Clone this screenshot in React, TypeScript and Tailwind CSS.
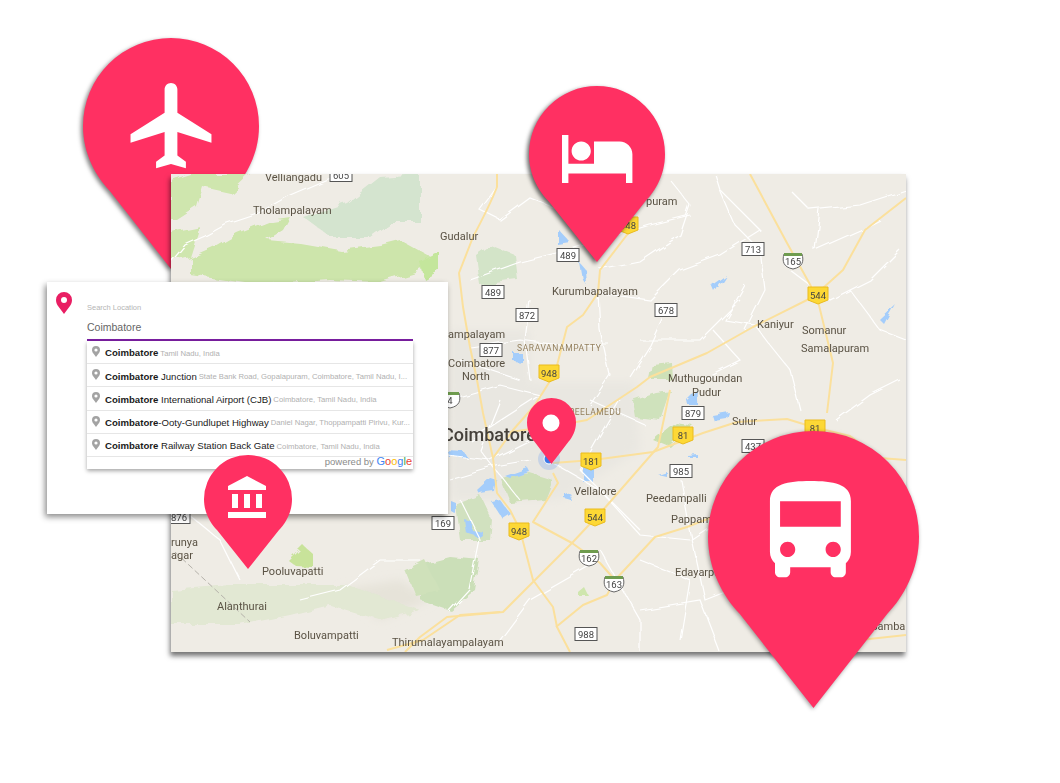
const pink = "#ff3062";

const planePath =
  "M21 16v-2l-8-5V3.5c0-.83-.67-1.5-1.5-1.5S10 2.67 10 3.5V9l-8 5v2l8-2.5V19l-2 1.5V22l3.5-1 3.5 1v-1.5L13 19v-5.5l8 2.5z";
const bedPath =
  "M7 13c1.66 0 3-1.34 3-3S8.66 7 7 7s-3 1.34-3 3 1.34 3 3 3zm12-6h-8v7H3V5H1v15h2v-3h18v3h2v-9c0-2.21-1.79-4-4-4z";
const busPath =
  "M4 16c0 .88.39 1.67 1 2.22V20c0 .55.45 1 1 1h1c.55 0 1-.45 1-1v-1h8v1c0 .55.45 1 1 1h1c.55 0 1-.45 1-1v-1.78c.61-.55 1-1.34 1-2.22V6c0-3.5-3.58-4-8-4s-8 .5-8 4v10zm3.5 1c-.83 0-1.5-.67-1.5-1.5S6.67 14 7.5 14s1.5.67 1.5 1.5S8.33 17 7.5 17zm9 0c-.83 0-1.5-.67-1.5-1.5s.67-1.5 1.5-1.5 1.5.67 1.5 1.5-.67 1.5-1.5 1.5zm1.5-6H6V6h12v5z";
const bankPath =
  "M4 10v7h3v-7H4zm6 0v7h3v-7h-3zM2 22h19v-3H2v3zm14-12v7h3v-7h-3zm-4.5-9L2 6v2h19V6l-9.5-5z";

// teardrop with the tip at the bottom centre
const dropPath = (w: number, h: number) => {
  const r = w / 2;
  const sx = w * 0.15;
  const sy = h * 0.66;
  return `M${r} 0A${r} ${r} 0 0 1 ${w} ${r}C${w} ${r * 1.32} ${w - sx * 0.5} ${sy - h * 0.06} ${w - sx} ${sy}L${r} ${h}L${sx} ${sy}C${sx * 0.5} ${sy - h * 0.06} 0 ${r * 1.32} 0 ${r}A${r} ${r} 0 0 1 ${r} 0Z`;
};

type PinProps = {
  w: number;
  h: number;
  className: string;
  color?: string;
  children?: React.ReactNode;
};

const Pin = ({ w, h, className, color = pink, children }: PinProps) => (
  <svg width={w} height={h} viewBox={`0 0 ${w} ${h}`} className={className}>
    <path d={dropPath(w, h)} fill={color} />
    {children}
  </svg>
);

const whiteBoxes: [string, number, number][] = [
  ["605", 341, 175],
  ["489", 568, 255],
  ["489", 493, 292],
  ["872", 527, 315],
  ["877", 491, 350],
  ["678", 666, 310],
  ["713", 753, 249],
  ["879", 693, 413],
  ["437", 753, 446],
  ["985", 681, 471],
  ["169", 443, 523],
  ["988", 586, 634],
  ["876", 179, 517],
];

const yellowShields: [string, number, number][] = [
  ["948", 628, 225],
  ["948", 549, 373],
  ["544", 818, 295],
  ["81", 683, 435],
  ["81", 815, 428],
  ["181", 591, 461],
  ["544", 595, 517],
  ["948", 519, 531],
];

const usShields: [string, number, number][] = [
  ["165", 793, 261],
  ["162", 589, 558],
  ["163", 614, 584],
  ["4", 450, 400],
];

const labels: [string, number, number][] = [
  ["Velliangadu", 265, 181],
  ["Tholampalayam", 253, 214],
  ["Gudalur", 440, 240],
  ["puram", 646, 205],
  ["Kurumbapalayam", 552, 295],
  ["ampalayam", 448, 338],
  ["Coimbatore", 448, 367],
  ["North", 462, 380],
  ["Kaniyur", 757, 328],
  ["Somanur", 802, 334],
  ["Samalapuram", 801, 352],
  ["Muthugoundan", 668, 382],
  ["Pudur", 692, 396],
  ["Sulur", 732, 425],
  ["Vellalore", 574, 495],
  ["Peedampalli", 646, 502],
  ["Pappampatti", 671, 523],
  ["Edayarpalayam", 675, 576],
  ["Samba", 871, 630],
  ["Thirumalayampalayam", 392, 646],
  ["Boluvampatti", 294, 639],
  ["Alanthurai", 217, 610],
  ["Pooluvapatti", 262, 575],
  ["runya", 171, 546],
  ["agar", 171, 559],
];

const yellowRoads = [
  "M497 174L497 187Q490 205 473 237L459 273L463 307L470 347L477 380L483 413L493 458L497 493L510 510L520 530L533 580L553 607L557 627L570 652",
  "M633 227L600 270L598 293L583 315L567 327L555 373L535 405L513 430L493 458",
  "M906 198L865 230L843 270L813 297L753 327L707 353L650 377L637 387L587 420L560 425L510 432",
  "M750 174L787 243L817 297L833 363L827 413",
  "M553 463L593 460L653 452L703 433L737 422L787 419L813 427L850 436L880 458L906 460",
  "M670 390L658 447L603 510L572 543L533 582L503 612L447 617L420 637L405 652",
  "M553 473L558 483L533 522L572 543L600 563L615 580L655 537L687 527L710 518",
  "M556 627L583 605L607 595L615 580",
  "M387 650L423 640L460 615L500 612",
  "M906 635L860 640L840 655",
];

const whiteRoads = [
  "M171 262L185 245L205 236L225 225L255 215L290 195L325 180L345 174",
  "M497 187L480 210L500 220L530 198L560 210",
  "M470 280L520 262L568 250L600 240L650 225L690 215",
  "M600 270L640 262L680 235L690 205L670 180",
  "M600 293L650 300L680 270L720 255L760 230L720 190L715 174",
  "M720 190L735 225L760 250L765 290L745 330",
  "M666 310L650 345L630 377",
  "M598 293L600 330L610 375L590 405",
  "M530 300L525 340L530 380",
  "M470 347L520 340L560 345L610 345",
  "M745 285L725 320L755 325L770 345L790 370L800 410",
  "M790 190L810 210L860 205L906 190",
  "M820 210L815 250L860 230L880 220",
  "M850 290L880 330L906 340",
  "M713 330L740 360L700 380",
  "M645 425L590 400",
  "M553 463L600 490L640 535L690 540L720 520",
  "M447 455L490 460L530 440",
  "M450 480L500 465L530 460",
  "M460 500L480 540L470 590L450 612",
  "M580 470L640 530",
  "M600 550L640 620L640 652",
  "M681 480L690 530L705 600L730 590L780 560",
  "M420 560L380 560L340 590L300 600",
  "M171 500L220 540L240 580",
  "M640 610L700 600L720 652",
  "M500 640L530 600L600 560",
  "M836 420L870 395L900 380",
  "M448 400L500 385L540 395L470 440",
  "M500 400L480 450L520 500",
  "M460 360L520 380",
  "M790 270L830 300L870 280L900 250",
  "M640 340L700 340L740 300",
  "M620 400L580 470",
  "M730 470L790 500",
  "M640 560L690 580L680 640",
];

const greens: [string, string][] = [
  ["M171 180L190 174H250L230 193L203 187L197 207L177 220H171Z", "#cfe6ae"],
  ["M171 232L200 226L190 257L171 262Z", "#cfe6ae"],
  ["M190 257L213 247L237 233L270 220L290 217L283 230L267 240L300 243L340 250L380 245L400 240L440 262L415 272L380 282L330 280L260 285L225 280L190 275Z", "#cde5ab"],
  ["M303 217L347 203L380 177L420 174V223L390 223L370 237L330 237Z", "#d4e4cf"],
  ["M420 262L440 252V272L425 280Z", "#c4e69c"],
  ["M476 255L490 245L515 255L518 280L480 285Z", "#d3e4c8"],
  ["M632 400L655 392L670 390L660 420L635 417Z", "#cfe2bc"],
  ["M653 440L675 422L693 425L670 447Z", "#cce0ae"],
  ["M653 365L672 363L673 380L650 380Z", "#cfe1b8"],
  ["M500 478L530 473L553 480L545 500L510 503Z", "#cfe0b9"],
  ["M455 505L480 495L492 520L490 540L460 540Z", "#d1e1bf"],
  ["M420 565L450 557L480 560L475 590L450 610L420 600Z", "#cbdfb8"],
  ["M405 570L425 560L440 590L415 595Z", "#cfe1ba"],
  ["M171 590L230 585L300 585L345 585L420 610L380 620L330 605L290 615L240 625L171 625Z", "#e2e8d3"],
  ["M288 560L303 545L312 553L312 567L296 566Z", "#c8e39a"],
  ["M578 592L584 587L588 595H578Z", "#cfe6ae"],
];

const waters: string[] = [
  "M557 228L570 242L557 244Z",
  "M580 263L586 270L587 285L583 280Z",
  "M513 352H522V362L513 361Z",
  "M448 452L465 453L468 458L450 458Z",
  "M505 476L528 468L530 472L510 478Z",
  "M477 490L490 478L497 480L495 492L480 494Z",
  "M492 502L500 500L511 514L503 519Z",
  "M583 467L593 468L593 482L583 482Z",
  "M564 493L568 491L571 500L564 498Z",
  "M450 500L455 502L455 513L450 510Z",
  "M463 518L470 520L472 530L484 532L478 536L465 532Z",
  "M685 398L690 393L697 390L696 403L686 403Z",
  "M713 416L730 413L728 420L715 422Z",
  "M688 456L698 455V458L688 458Z",
  "M659 476L668 473V478Z",
  "M712 285L726 275L715 292Z",
  "M880 320L896 305L885 325Z",
];

const MapCanvas = () => (
  <svg
    width={735}
    height={478}
    viewBox="171 174 735 478"
    className="block blur-[0.3px]"
  >
    <defs>
      <filter id="rough" x="-5%" y="-5%" width="110%" height="110%">
        <feTurbulence type="fractalNoise" baseFrequency="0.06" numOctaves={3} seed={4} />
        <feDisplacementMap in="SourceGraphic" scale={9} />
        <feGaussianBlur stdDeviation={0.5} />
      </filter>
      <filter id="wiggle" x="-5%" y="-5%" width="110%" height="110%">
        <feTurbulence type="fractalNoise" baseFrequency="0.05" numOctaves={2} seed={9} />
        <feDisplacementMap in="SourceGraphic" scale={7} />
      </filter>
      <filter id="soft" x="-10%" y="-10%" width="120%" height="120%">
        <feGaussianBlur stdDeviation={5} />
      </filter>
    </defs>
    <rect x={171} y={174} width={735} height={478} fill="#efece5" />
    <g filter="url(#soft)">
      <path d="M448 382H635L640 450L560 500L450 500Z" fill="#e9e7e1" />
      <path d="M448 330L530 330L530 385L448 385Z" fill="#e9e7e1" />
      <path d="M340 590L400 580L430 600L380 620Z" fill="#e6e3d9" />
      <path d="M788 440H840V450H788Z" fill="#dedbd2" />
    </g>
    <g filter="url(#rough)">
      {greens.map(([d, fill], i) => (
        <path key={i} d={d} fill={fill} />
      ))}
      {waters.map((d, i) => (
        <path key={i} d={d} fill="#a4cdfb" />
      ))}
    </g>
    <g filter="url(#wiggle)" fill="none">
      {whiteRoads.map((d, i) => (
        <path key={i} d={d} stroke="#ffffff" strokeWidth={1.2} />
      ))}
    </g>
    <g fill="none" strokeLinejoin="round">
      {yellowRoads.map((d, i) => (
        <path key={i} d={d} stroke="#fbe09c" strokeWidth={2} />
      ))}
    </g>
    <path d="M175 552L250 622" fill="none" stroke="#b5b2aa" strokeWidth={1} strokeDasharray="6 3" />
    <g className="[font-family:Roboto,sans-serif]" fontSize={11} fill="#5a5244">
      {labels.map(([t, x, y]) => (
        <text key={t + x} x={x} y={y}>
          {t}
        </text>
      ))}
      <text x={517} y={351} fontSize={8.5} letterSpacing={0.6} fill="#94805e">
        SARAVANAMPATTY
      </text>
      <text x={569} y={415} fontSize={8.5} letterSpacing={0.4} fill="#94805e">
        PEELAMEDU
      </text>
      <text x={442} y={441} fontSize={18} fontWeight={500} fill="#45403a">
        Coimbatore
      </text>
    </g>
    <g className="[font-family:Roboto,sans-serif]" textAnchor="middle" fontSize={9.5} fill="#444444">
      {whiteBoxes.map(([t, x, y]) => (
        <g key={t + x}>
          <rect x={x - 11} y={y - 6.5} width={22} height={13} fill="#ffffff" stroke="#555555" />
          <text x={x} y={y + 3.5}>
            {t}
          </text>
        </g>
      ))}
      {yellowShields.map(([t, x, y]) => (
        <g key={t + x}>
          <path
            d={`M${x - 10} ${y - 8}H${x + 10}V${y + 5}L${x} ${y + 9}L${x - 10} ${y + 5}Z`}
            fill="#fdd835"
            stroke="#eabb1e"
            strokeLinejoin="round"
          />
          <text x={x} y={y + 3.5}>
            {t}
          </text>
        </g>
      ))}
      {usShields.map(([t, x, y]) => (
        <g key={t + x}>
          <path
            d={`M${x - 9} ${y - 7}H${x + 9}C${x + 11} ${y} ${x + 10} ${y + 6} ${x} ${y + 8}C${x - 10} ${y + 6} ${x - 11} ${y} ${x - 9} ${y - 7}Z`}
            fill="#ffffff"
            stroke="#666666"
          />
          <rect x={x - 9} y={y - 8} width={18} height={3} fill="#6f9c4f" />
          <text x={x} y={y + 4}>
            {t}
          </text>
        </g>
      ))}
    </g>
    <circle cx={549} cy={459} r={11} fill="#4285f4" fillOpacity={0.2} />
    <circle cx={549} cy={459} r={5} fill="#3b78e7" stroke="#ffffff" />
  </svg>
);

const places: { name: string; rest?: string; detail: string }[] = [
  { name: "Coimbatore", detail: "Tamil Nadu, India" },
  {
    name: "Coimbatore",
    rest: " Junction",
    detail: "State Bank Road, Gopalapuram, Coimbatore, Tamil Nadu, I...",
  },
  {
    name: "Coimbatore",
    rest: " International Airport (CJB)",
    detail: "Coimbatore, Tamil Nadu, India",
  },
  {
    name: "Coimbatore",
    rest: "-Ooty-Gundlupet Highway",
    detail: "Daniel Nagar, Thoppampatti Pirivu, Kur...",
  },
  {
    name: "Coimbatore",
    rest: " Railway Station Back Gate",
    detail: "Coimbatore, Tamil Nadu, India",
  },
];

const SearchCard = () => (
  <div className="absolute left-[47px] top-[282px] flex h-[232px] w-[401px] bg-white pl-[9px] pt-[10px] shadow-[-2px_3px_6px_rgba(0,0,0,0.45)] [font-family:'Liberation_Sans',Arial,sans-serif]">
    <Pin w={16} h={22} className="mr-[15px] shrink-0" color="#e91e63">
      <circle cx={8} cy={8} r={3} fill="#ffffff" />
    </Pin>
    <div className="w-[326px]">
      <p className="mt-[11px] h-[10px] text-[7.5px] leading-[10px] text-[#b5b5b5]">
        Search Location
      </p>
      <p className="mt-[7px] h-[19px] text-[10.5px] leading-[14px] text-[#666666]">
        Coimbatore
      </p>
      <div className="h-[2px] bg-[#7b1fa2]" />
      <div className="shadow-[0_2px_4px_rgba(0,0,0,0.35)]">
        {places.map((p, i) => (
          <div
            key={i}
            className="flex h-[23.2px] items-center gap-[5px] whitespace-nowrap border-b border-[#e6e6e6] pl-[5px] pt-[3px]"
          >
            <Pin w={8} h={11} className="mb-[4px] shrink-0" color="#a3a3a3">
              <circle cx={4} cy={4} r={1.6} fill="#ffffff" />
            </Pin>
            <span className="text-[9.6px] text-[#1a1a1a]">
              <b>{p.name}</b>
              {p.rest}
            </span>
            <span className="-ml-[3px] text-[7.7px] text-[#b0b0b0]">{p.detail}</span>
          </div>
        ))}
        <div className="flex h-[12px] items-center justify-end pb-[2px] pr-px text-[9.5px] leading-none text-[#8a8a8a]">
          powered by&nbsp;
          <span className="text-[11px]">
            <span className="text-[#4285f4]">G</span>
            <span className="text-[#ea4335]">o</span>
            <span className="text-[#fbbc05]">o</span>
            <span className="text-[#4285f4]">g</span>
            <span className="text-[#34a853]">l</span>
            <span className="text-[#ea4335]">e</span>
          </span>
        </div>
      </div>
    </div>
  </div>
);

export default function App() {
  return (
    <div className="relative h-[783px] w-[1060px] overflow-hidden bg-white pl-[171px] pt-[174px]">
      <Pin
        w={176}
        h={231}
        className="absolute left-[83px] top-[38px] drop-shadow-[-2px_2px_2px_rgba(0,0,0,0.5)]"
      >
        <g transform="translate(39 36.5) scale(4.26)">
          <path d={planePath} fill="#ffffff" />
        </g>
      </Pin>

      <div className="relative w-[735px] shadow-[-1px_4px_5px_rgba(0,0,0,0.55)]">
        <MapCanvas />
      </div>

      <SearchCard />

      <Pin
        w={136}
        h={176}
        className="absolute left-[529px] top-[86px] drop-shadow-[-2px_2px_2px_rgba(0,0,0,0.6)]"
      >
        <g transform="translate(29.8 33) scale(3.2)">
          <path d={bedPath} fill="#ffffff" />
        </g>
      </Pin>

      <Pin w={49} h={66} className="absolute left-[527px] top-[398px]">
        <circle cx={24} cy={25} r={8.5} fill="#ffffff" />
      </Pin>

      <Pin w={88} h={114} className="absolute left-[204px] top-[455px]">
        <g transform="translate(20 19) scale(2)">
          <path d={bankPath} fill="#ffffff" />
        </g>
      </Pin>

      <Pin
        w={211}
        h={277}
        className="absolute left-[708px] top-[431px] drop-shadow-[-1px_1px_2px_rgba(0,0,0,0.4)]"
      >
        <g transform="translate(41.7 40) scale(5.06)">
          <path d={busPath} fill="#ffffff" />
        </g>
      </Pin>
    </div>
  );
}
